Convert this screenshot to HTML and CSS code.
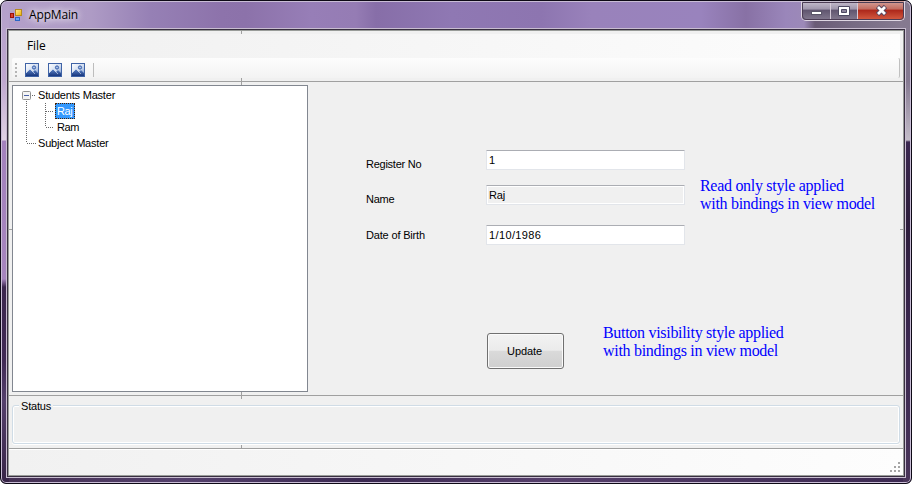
FILE: index.html
```html
<!DOCTYPE html>
<html lang="en">
<head>
<meta charset="utf-8">
<title>AppMain</title>
<link rel="stylesheet" href="styles.css">
</head>
<body>
<svg class="defs" width="0" height="0" aria-hidden="true">
  <defs>
    <linearGradient id="sky" x1="0" y1="0" x2="1" y2="1"><stop offset="0" stop-color="#fff"/><stop offset=".55" stop-color="#cfdcf0"/><stop offset="1" stop-color="#6d8fcb"/></linearGradient>
    <linearGradient id="hill" x1="0" y1="0" x2="0" y2="1"><stop offset="0" stop-color="#5f86c8"/><stop offset="1" stop-color="#17367e"/></linearGradient>
    <linearGradient id="gold" x1="0" y1="0" x2="1" y2="1"><stop offset="0" stop-color="#ffeb9a"/><stop offset="1" stop-color="#eeb100"/></linearGradient>
    <symbol id="picture" viewBox="0 0 14 14">
      <rect x=".5" y=".5" width="13" height="13" fill="url(#sky)" stroke="#3f63a6"/>
      <path d="M1 10 5 6l3 3 2-2 3 3v3H1z" fill="url(#hill)"/>
      <path d="M1 10 5 6l5 5" fill="none" stroke="#e8effa" stroke-width=".6"/>
      <circle cx="9" cy="4.500" r="1.600" fill="#a9c1ea" stroke="#2d56a3"/>
    </symbol>
  </defs>
</svg>
<div class="window">
  <header class="titlebar">
    <svg class="app-icon" width="13" height="13" viewBox="0 0 13 13">
      <path d="M0 1.500h4M0 11.500h4" stroke="#b5adc0"/>
      <rect x=".5" y="4.500" width="3" height="4" fill="#d8402c" stroke="#9c1208"/>
      <rect x="5.500" y=".5" width="6" height="6" fill="url(#gold)" stroke="#b58a1c"/>
      <rect x="5.500" y="8.500" width="4" height="3" fill="#6ba5f3" stroke="#2b66c4"/>
    </svg>
    <span class="title">AppMain</span>
    <div class="controls">
      <span class="ctl min"><svg width="28" height="18"><rect x="9.500" y="10.500" width="10" height="3" fill="#fff" stroke="#5a5568"/></svg></span>
      <span class="ctl max"><svg width="26" height="18"><path d="M7.500 5.500h11v9h-11z" fill="#fff" stroke="#4d4962"/><path d="M10.500 8.500h5v3h-5z" fill="#8b839b" stroke="#4d4962"/></svg></span>
      <span class="ctl close"><svg width="46" height="18"><path d="m19.500 5.500 8 8m0-8-8 8" stroke="#59455c" stroke-width="4.600"/><path d="m20 6 7 7m0-7-7 7" stroke="#fff" stroke-width="2.800"/></svg></span>
    </div>
  </header>
  <main class="client">
    <section class="top">
      <nav class="menu"><span class="file">File</span></nav>
      <div class="toolbar">
        <i class="grip"></i>
        <svg width="14" height="14"><use href="#picture"/></svg>
        <svg width="14" height="14"><use href="#picture"/></svg>
        <svg width="14" height="14"><use href="#picture"/></svg>
        <i class="sep"></i>
      </div>
      <i class="tick t1"></i><i class="tick t2"></i>
    </section>
    <section class="middle">
      <div class="tree">
        <svg class="lines" width="60" height="70">
          <path d="M13.500 15V57M19 9.500h4M14 57.500h9M32.500 17V41M33 25.500h8M33 41.500h8" fill="none" stroke="#666" stroke-dasharray="1 1"/>
          <rect x="9.500" y="5.500" width="8" height="8" rx="1" fill="#f4f4f4" stroke="#919191"/>
          <path d="M11 9.500h5" stroke="#4b63a7"/>
        </svg>
        <div class="node root"><span>Students Master</span></div>
        <div class="node child"><span class="selected">Raj</span></div>
        <div class="node child"><span>Ram</span></div>
        <div class="node root"><span>Subject Master</span></div>
      </div>
      <div class="detail">
        <div class="form">
          <label>Register No</label><div class="input">1</div>
          <label>Name</label><div class="input readonly">Raj</div>
          <label class="birth">Date of Birth</label><div class="input date">1/10/1986</div>
        </div>
        <p class="note name-note">Read only style applied<br>with bindings in view model</p>
        <div class="action">
          <button class="update">Update</button>
          <p class="note">Button visibility style applied<br>with bindings in view model</p>
        </div>
      </div>
      <i class="tick t1"></i><i class="tick t3"></i><i class="side left"></i><i class="side right"></i>
    </section>
    <section class="status">
      <div class="group"><span class="legend">Status</span></div>
      <i class="tick t1"></i><i class="tick t3"></i>
    </section>
    <footer class="statusbar">
      <svg width="11" height="11" fill="#a5a5a5"><path d="M8 0h2v2H8zM4 4h2v2H4zM8 4h2v2H8zM0 8h2v2H0zM4 8h2v2H4zM8 8h2v2H8z"/></svg>
    </footer>
  </main>
</div>
</body>
</html>
```
FILE: styles.css
```css
* { box-sizing: border-box; }
body { margin: 0; background: #fff; color: #000; font: 11px/16px "Liberation Sans", Arial, sans-serif; letter-spacing: -.2px; overflow: hidden; }
.defs { position: absolute; }
svg { display: block; flex: none; }
.window {
  width: 912px; height: 484px; padding: 0 6px 6px; display: flex; flex-direction: column;
  border: 1px solid #0d0915; border-radius: 7px 7px 6px 6px;
  box-shadow: inset 0 0 0 1px #c9bdd6;
  background:
    linear-gradient(#b4a0ca, #bfa7cf 80px, #e0d3e4 139px, #a382bd 140px, #a685be 278px, #3c274e 286px, #412a55 360px, #55406c 400px, #372446) left / 8px 100% no-repeat,
    linear-gradient(#85798f, #857991 80px, #c3bcc8 139px, #3b2850 141px, #2d1d3c 220px, #3b2850 340px, #493459) right / 8px 100% no-repeat,
    linear-gradient(90deg, #443052, #55416d 20%, #3b2951 40%, #57406c 60%, #3c2951) bottom / 100% 8px no-repeat,
    linear-gradient(90deg, #b4a0ca 0, #ae9bc5 90px, #9680b5 150px, #8d73ab 220px, #8c72aa 245px, #977eb7 310px, #957cb4 355px, #876ea8 375px, #8f78b3 450px, #8d75b0 540px, #9982bb 590px, #9983bd 700px, #8871a5 745px, #9a86ba 785px, #9c89b8 803px, #6a5b76 814px, #766a83 850px, #897d93 912px);
}
.titlebar { height: 28px; flex: none; display: flex; align-items: flex-start; padding-left: 3px; }
.app-icon { margin-top: 8px; }
.title { font: 12px/16px "Open Sans", sans-serif; letter-spacing: -.15px; margin: 6px 0 0 6px; text-shadow: 0 0 7px #fff, 0 0 10px #fff; }
.controls { margin: 0 0 0 auto; display: flex; height: 20px; border: 1px solid #ded6e2; border-top: 0; border-radius: 0 0 5px 5px; outline: 1px solid #4b3c54; outline-offset: -2px; overflow: hidden; }
.ctl { display: block; background: linear-gradient(#c9c1d0, #9d94aa 44%, #5f546e 46%, #83798f); }
.ctl + .ctl { border-left: 1px solid #d5cbd9; }
.ctl.close { background: linear-gradient(#d5a49d, #c3695d 44%, #ab2519 46%, #d65d42); }
.client { flex: 1; display: flex; flex-direction: column; background: #f0f0f0; border: 1px solid #999c99; outline: 1px solid #382e40; box-shadow: 0 0 0 2px #c8bdd0; margin: 1px; min-height: 0; }
.top { position: relative; height: 51px; padding: 3px 3px 0; border-bottom: 1px solid #a0a0a0; }
.menu { height: 24px; padding: 4px 15px; background: linear-gradient(90deg, #f0f0f0, #fdfdfd); }
.file { font: 12px/16px "Open Sans", sans-serif; letter-spacing: -.1px; display: block; }
.toolbar { height: 20px; display: flex; align-items: center; padding: 5px 3px 1px; background: linear-gradient(#fdfdfd, #f3f3f3); border-radius: 2px; border-right: 1px solid #c0c0c0; }
.toolbar svg { margin-right: 9px; }
.grip { width: 2px; height: 14px; margin-right: 8px; background: repeating-linear-gradient(#b5b5b5 0 2px, transparent 2px 4px); }
.sep { width: 1px; height: 14px; margin-left: -1px; background: #bdbdbd; }
.tick { position: absolute; left: 232px; width: 1px; height: 3px; background: #a0a0a0; }
.t1 { top: 0; }
.t2, .t3 { bottom: 0; }
.side { position: absolute; top: 147px; width: 3px; height: 1px; background: #a0a0a0; }
.side.left { left: 0; }
.side.right { right: 0; }
.middle { position: relative; height: 314px; padding: 3px; display: flex; border-bottom: 1px solid #a0a0a0; }
.tree { position: relative; width: 296px; height: 307px; background: #fff; border: 1px solid #828790; padding-top: 1px; }
.lines { position: absolute; left: 0; top: 0; }
.node { height: 16px; position: relative; display: flex; }
.root { padding-left: 25px; }
.child { padding-left: 44px; letter-spacing: -.4px; }
.selected { background: #39f; color: #fff; outline: 1px dotted #4a2200; outline-offset: -1px; padding: 0 3px 0 2px; margin-left: -2px; }
.detail { flex: 1; display: grid; grid-template-columns: 319px 1fr; grid-template-rows: 183px 1fr; padding: 65px 0 0 58px; column-gap: 15px; }
.form { display: grid; grid-template-columns: 120px 199px; grid-template-rows: 35px 40px 20px; align-content: start; }
.form label { padding-top: 6px; letter-spacing: -.25px; }
.form .birth { padding-top: 2px; letter-spacing: -.17px; }
.input { height: 20px; border: 1px solid #e2e5ea; border-top-color: #abadb3; border-radius: 1px; background: #fff; padding: 1px 2px; }
.readonly { background: #f0f0f0; box-shadow: inset 0 0 0 1px #fff; }
.date { letter-spacing: .38px; }
.note { margin: 0; color: #00f; font: 16px/18px "Liberation Serif", serif; letter-spacing: -.3px; white-space: nowrap; }
.name-note { padding-top: 27px; }
.action { grid-column: 1 / 3; display: flex; padding-left: 121px; }
.update { width: 77px; height: 36px; margin-right: 39px; font: inherit; letter-spacing: -.1px; color: #000; border: 1px solid #707070; border-radius: 3px; padding: 0 2px 0 0; background: linear-gradient(#f2f2f2, #ebebeb 48%, #dadada 50%, #cfcfcf); box-shadow: inset 0 0 0 1px #fafafa; }
.action .note { margin-top: -9px; }
.status { position: relative; height: 53px; padding: 9px 3px 0 3px; border-bottom: 1px solid #a0a0a0; }
.group { height: 39px; border: 1px solid #d0dce6; border-radius: 3px; box-shadow: inset 0 0 0 1px #fff, 0 1px #fff; }
.legend { display: block; width: 34px; margin: -8px 0 0 6px; padding-left: 2px; background: #f0f0f0; line-height: 17px; }
.statusbar { flex: 1; display: flex; justify-content: flex-end; padding: 12px 2px 0; background: linear-gradient(90deg, #f1f1f1, #fdfdfd); border-top: 1px solid #fff; }
```
